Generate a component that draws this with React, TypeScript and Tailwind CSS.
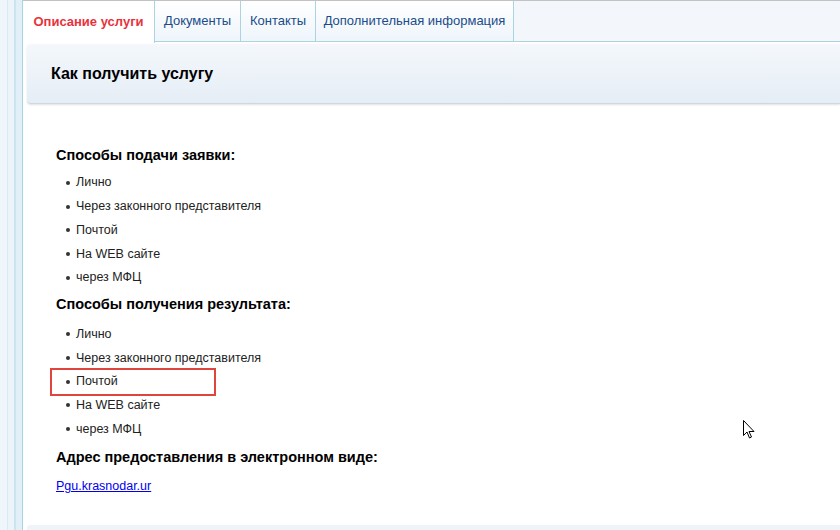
import React from "react";

const FIRST = ["Лично", "Через законного представителя", "Почтой", "На WEB сайте", "через МФЦ"];

function Item({ text, marked }: { text: string; marked?: boolean }) {
  return (
    <li className="relative flex items-center h-[23.7px] pl-[10px] text-[12.5px] text-[#222]">
      <span className="w-[4px] h-[4px] rounded-full bg-[#333] mr-[6px]" />
      {text}
      {marked && (
        <span className="absolute left-[-6px] top-[-2px] w-[166px] h-[28px] border-2 border-[#e0453d]" />
      )}
    </li>
  );
}

export default function App() {
  const tabs = [
    { t: "Документы", cls: "w-[86px]" },
    { t: "Контакты", cls: "w-[75px]" },
    { t: "Дополнительная информация", cls: "w-[198px]" },
  ];

  return (
    <div className="relative w-[840px] h-[530px] overflow-hidden flex bg-white font-['Liberation_Sans',Arial,sans-serif]">
      {/* left frame strip */}
      <div className="flex h-full shrink-0">
        <div className="w-[7px] bg-[#eef5fb]" />
        <div className="w-px bg-[#dde9f2]" />
        <div className="w-[6px] bg-[#ecf4fa]" />
        <div className="w-[2px] bg-[#cbe5f0]" />
        <div className="w-[6px] bg-[#e1eff8]" />
        <div className="w-px bg-[#a9d5e1]" />
      </div>

      <div className="flex-1 flex flex-col min-w-0">
        {/* tab bar */}
        <div className="flex h-[42px] shrink-0 border-t border-[#c2c2c2] border-b border-b-[#abd4df] bg-[#f3f7fc]">
          <div className="flex items-center justify-center w-[132px] h-[42px] bg-white border-r border-[#abd4df] text-[13px] font-bold text-[#e8323c] whitespace-nowrap">
            Описание услуги
          </div>
          {tabs.map(({ t, cls }) => (
            <div
              key={t}
              className={`flex items-center justify-center ${cls} bg-gradient-to-b from-white to-[#eef5fb] border-r border-[#abd4df] text-[13px] text-[#1b4c8a] whitespace-nowrap`}
            >
              {t}
            </div>
          ))}
        </div>

        {/* section header */}
        <div className="mt-[2px] ml-[4px] h-[60px] shrink-0 flex items-center pl-[24px] rounded-l-[4px] bg-gradient-to-b from-[#f4f8fc] to-[#e5edf5] border-b border-[#cdd8e2] shadow-[0_1px_2px_rgba(0,0,0,0.12)]">
          <h2 className="text-[16px] font-bold text-black">Как получить услугу</h2>
        </div>

        {/* content */}
        <div className="flex-1 pl-[33px] pt-[41px]">
          <h3 className="text-[14.5px] leading-[20px] font-bold text-black">Способы подачи заявки:</h3>
          <ul className="mt-[6px]">
            {FIRST.map((t) => (
              <Item key={t} text={t} />
            ))}
          </ul>
          <h3 className="mt-[5px] text-[14.5px] leading-[20px] font-bold text-black">Способы получения результата:</h3>
          <ul className="mt-[8px]">
            {FIRST.map((t) => (
              <Item key={t} text={t} marked={t === "Почтой"} />
            ))}
          </ul>
          <h3 className="mt-[6px] text-[14.5px] leading-[20px] font-bold text-black">Адрес предоставления в электронном виде:</h3>
          <a href="#" className="block mt-[9px] text-[12.5px] leading-[20px] text-[#0000ee] underline w-fit">
            Pgu.krasnodar.ur
          </a>
        </div>

        <div className="ml-[4px] h-[5px] shrink-0 rounded-tl-[3px] bg-[#eef4f9]" />
      </div>

      {/* mouse cursor */}
      <svg className="absolute left-[743px] top-[420px]" width="13" height="20" viewBox="0 0 13 20">
        <path
          d="M0.5 0.5 L0.5 15.5 L4 12 L6.5 18 L8.5 17 L6 11.5 L11 11.5 Z"
          fill="#fff"
          stroke="#000"
          strokeWidth="1"
          strokeLinejoin="miter"
        />
      </svg>
    </div>
  );
}
